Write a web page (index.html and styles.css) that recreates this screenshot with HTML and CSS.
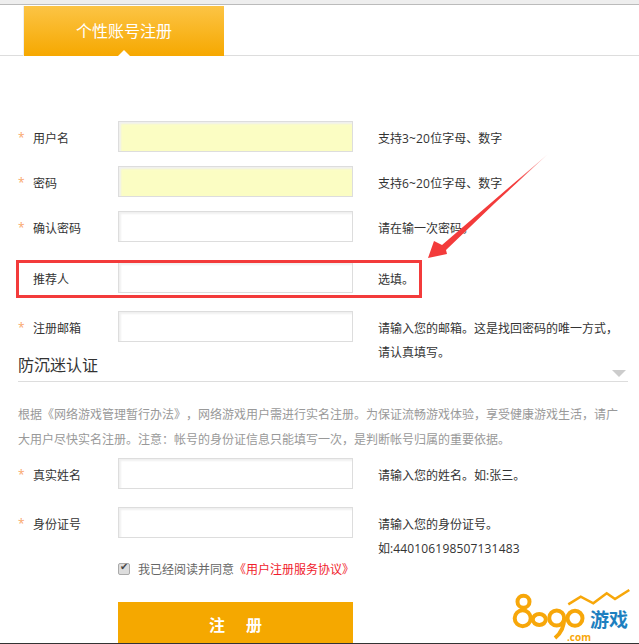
FILE: index.html
```html
<!DOCTYPE html>
<html lang="zh-CN">
<head>
    <meta charset="UTF-8">
    <title>个性账号注册</title>
    <link rel="stylesheet" href="styles.css">
</head>
<body>
    <div class="topbar"></div>
    <div class="tabs">
        <div class="tab">个性账号注册</div>
    </div>

    <form class="reg-form">
        <div class="row row-first">
            <span class="star">*</span><label>用户名</label>
            <input type="text" class="field field-filled">
            <span class="hint">支持<span class="num">3~20</span>位字母、数字</span>
        </div>
        <div class="row">
            <span class="star">*</span><label>密码</label>
            <input type="text" class="field field-filled">
            <span class="hint">支持<span class="num">6~20</span>位字母、数字</span>
        </div>
        <div class="row">
            <span class="star">*</span><label>确认密码</label>
            <input type="text" class="field">
            <span class="hint">请在输一次密码。</span>
        </div>
        <div class="row row-referrer">
            <span class="star"></span><label>推荐人</label>
            <input type="text" class="field">
            <span class="hint">选填。</span>
        </div>
        <div class="row row-email">
            <span class="star">*</span><label>注册邮箱</label>
            <input type="text" class="field">
            <span class="hint hint-long">请输入您的邮箱。这是找回密码的唯一方式，<br>请认真填写。</span>
        </div>

        <div class="section-title">防沉迷认证<span class="caret"></span></div>
        <p class="notice">根据《网络游戏管理暂行办法》，网络游戏用户需进行实名注册。为保证流畅游戏体验，享受健康游戏生活，请广<br>大用户尽快实名注册。注意：帐号的身份证信息只能填写一次，是判断帐号归属的重要依据。</p>

        <div class="row row-name">
            <span class="star">*</span><label>真实姓名</label>
            <input type="text" class="field">
            <span class="hint">请输入您的姓名。如:张三。</span>
        </div>
        <div class="row row-id">
            <span class="star">*</span><label>身份证号</label>
            <input type="text" class="field">
            <span class="hint hint-long">请输入您的身份证号。<br>如:<span class="num">440106198507131483</span></span>
        </div>

        <div class="agree">
            <input type="checkbox" checked>
            <span>我已经阅读并同意</span>
            <a href="#">《用户注册服务协议》</a>
        </div>
        <button type="button" class="btn">注 册</button>
    </form>

    <div class="mark-box"></div>
    <svg class="mark-arrow" width="130" height="110" viewBox="0 0 130 110">
        <defs>
            <linearGradient id="fade" gradientUnits="userSpaceOnUse" x1="16" y1="95" x2="123" y2="1">
                <stop offset="0.7" stop-color="#f33b3b"/>
                <stop offset="1" stop-color="#f33b3b" stop-opacity="0.2"/>
            </linearGradient>
        </defs>
        <path d="M3 105 L9 88 L17 92 L67 49 L123 1 L70 50 L21 97 L22 101 Z" fill="url(#fade)"/>
    </svg>

    <div class="logo">
        <svg width="127" height="56" viewBox="0 0 127 56">
            <g fill="none" stroke="#f7a70a" stroke-width="4">
                <circle cx="11.5" cy="15.7" r="6"/>
                <circle cx="10.7" cy="32.3" r="8"/>
                <ellipse cx="27.3" cy="33.5" rx="6.5" ry="5.5"/>
                <circle cx="44.7" cy="32" r="7.5"/>
                <path d="M52.2 32 C52.2 41 48 48 43 52"/>
                <circle cx="63" cy="32.3" r="7.5"/>
            </g>
            <path d="M56.3 18.3 L68.7 10.7 L81.3 17.3 L94.7 7.3 L103 13 L117.3 4" fill="none" stroke="#f7a70a" stroke-width="2.6"/>
        </svg>
        <span class="logo-name">游戏</span>
        <span class="logo-com">.com</span>
    </div>

    <div class="bottom-line"></div>
</body>
</html>
```

FILE: styles.css
```css
* {
    margin: 0;
    padding: 0;
    box-sizing: border-box;
}

html, body {
    height: 644px;
    overflow: hidden;
}

body {
    position: relative;
    background-color: #fff;
    font-family: "Open Sans", "Noto Sans CJK SC", sans-serif;
    font-size: 12px;
    color: #333;
    text-spacing-trim: space-all;
}

.topbar {
    height: 5px;
    background-color: #eee;
    border-bottom: 1px solid #bbb;
}

.tabs {
    height: 51px;
    padding-left: 24px;
    padding-top: 1px;
    border-bottom: 1px solid #ddd;
}

.tab {
    position: relative;
    width: 200px;
    height: 50px;
    line-height: 50px;
    text-align: center;
    font-size: 16px;
    color: #fff;
    background: linear-gradient(#fcc445, #f6a800);
    box-shadow: -1px 0 #eee;
}

.tab::after {
    content: "";
    position: absolute;
    left: 94px;
    bottom: 0;
    border: 6px solid transparent;
    border-top: 0;
    border-bottom-color: #fff;
}

.reg-form {
    padding-left: 18px;
}

.row {
    display: flex;
    align-items: center;
    height: 31px;
    margin-bottom: 14px;
}

.row-first {
    margin-top: 65px;
}

.row-referrer {
    margin-top: 20px;
    margin-bottom: 18px;
}

.row-email {
    margin-bottom: 0;
}

.row-name {
    margin-bottom: 18px;
}

.row-id {
    margin-bottom: 0;
}

.star {
    width: 15px;
    padding-top: 2px;
    color: #f9a66b;
}

.row label {
    width: 85px;
    padding-top: 2px;
}

.field {
    width: 235px;
    height: 31px;
    border: 1px solid #ddd;
    box-shadow: inset 2px 2px 2px #f0f0f0;
    background-color: #fff;
}

.field-filled {
    background-color: #fbfdc3;
}

.hint {
    margin-left: 25px;
    padding-top: 2px;
}

.hint-long {
    align-self: flex-start;
    margin-top: 6px;
    padding-top: 0;
    line-height: 24px;
}

.num {
    letter-spacing: 0.17px;
}

.section-title {
    position: relative;
    width: 610px;
    height: 40px;
    padding-top: 11px;
    font-size: 16px;
    line-height: 24px;
    border-bottom: 1px solid #ddd;
}

.caret {
    position: absolute;
    right: 2px;
    top: 28px;
    border: 7px solid transparent;
    border-bottom: 0;
    border-top-color: #ccc;
}

.notice {
    margin-top: 20px;
    margin-bottom: 6px;
    line-height: 25px;
    color: #999;
    white-space: nowrap;
}

.agree {
    display: flex;
    align-items: center;
    gap: 8px;
    margin-top: 21px;
    margin-left: 100px;
    height: 20px;
    color: #666;
}

.agree input {
    appearance: none;
    position: relative;
    width: 12px;
    height: 12px;
    border: 1px solid #aaa;
    border-radius: 2px;
    background-color: #ddd;
}

.agree input::before {
    content: "✔";
    position: absolute;
    left: 1px;
    top: -3px;
    font-family: "DejaVu Sans", sans-serif;
    font-size: 10px;
    color: #444;
}

.agree a {
    margin-left: -8px;
    color: #f01c2c;
    text-decoration: none;
}

.btn {
    display: block;
    width: 235px;
    height: 42px;
    margin-top: 23px;
    margin-left: 100px;
    padding-top: 1px;
    border: none;
    background-color: #f5a800;
    color: #fff;
    font-family: "Liberation Serif", "Noto Sans CJK SC", serif;
    font-size: 16px;
    font-weight: bold;
    word-spacing: 17px;
}

.mark-box {
    position: absolute;
    left: 16px;
    top: 260px;
    width: 406px;
    height: 38px;
    border: 3px solid #f33b3b;
}

.mark-arrow {
    position: absolute;
    left: 425px;
    top: 153px;
}

.logo {
    position: absolute;
    left: 512px;
    top: 586px;
    width: 127px;
    height: 56px;
}

.logo-name {
    position: absolute;
    left: 78px;
    top: 22px;
    font-size: 19px;
    line-height: 24px;
    font-weight: bold;
    color: #1d7fc0;
}

.logo-com {
    position: absolute;
    left: 55px;
    top: 45px;
    font-size: 10px;
    line-height: 12px;
    font-weight: bold;
    color: #f7a70a;
}

.bottom-line {
    position: absolute;
    left: 0;
    right: 0;
    bottom: 0;
    height: 1px;
    background-color: #333;
}
```
